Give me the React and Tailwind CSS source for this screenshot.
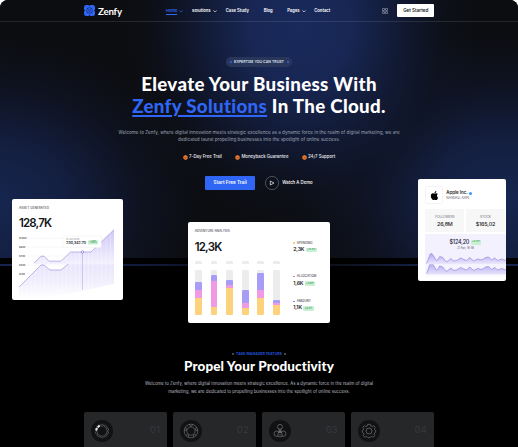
import React from "react";

const Chevron = ({ className = "" }) => (
  <svg viewBox="0 0 8 5" className={"h-[2.6px] w-[4.2px] " + className} fill="none" stroke="currentColor" strokeWidth="1.3">
    <path d="M0.8 0.8 L4 4 L7.2 0.8" />
  </svg>
);

const Logo = () => (
  <svg viewBox="0 0 33 33" className="h-[11px] w-[11px]">
    <path
      fill="#2f66f6"
      d="M7 0h6.500l3 3L19.500 0H26a7 7 0 0 1 7 7v6.500l-3 3 3 3V26a7 7 0 0 1-7 7h-6.500l-3-3-3 3H7a7 7 0 0 1-7-7v-6.500l3-3-3-3V7a7 7 0 0 1 7-7z"
    />
    <circle cx="16.500" cy="16.500" r="8.500" fill="none" stroke="#10214f" strokeWidth="1.800" />
    <circle cx="16.500" cy="16.500" r="3.200" fill="none" stroke="#10214f" strokeWidth="1.800" />
    <path d="M8 8l3 3M25 8l-3 3M8 25l3-3M25 25l-3-3" stroke="#10214f" strokeWidth="1.600" />
  </svg>
);

const Check = () => (
  <svg viewBox="0 0 14 14" className="h-[5px] w-[5px]">
    <path
      fill="#f0782c"
      d="M7 0l1.900 1.300 2.300-.1.700 2.200 1.900 1.300L13 7l.8 2.300-1.900 1.300-.7 2.200-2.300-.1L7 14l-1.900-1.300-2.300.1-.7-2.200L.2 9.300 1 7 .2 4.700l1.900-1.300.7-2.200 2.300.1z"
    />
    <path d="M4.200 7.200l2 2 3.600-4" fill="none" stroke="#20130c" strokeWidth="1.200" />
  </svg>
);

const Header = () => (
  <header className="relative flex h-[22px] items-center border-b border-white/10 text-[4px] font-semibold text-white">
    <div className="ml-[84px] flex w-[82px] items-center gap-[3px]">
      <Logo />
      <span className="font-['Lato',sans-serif] text-[9.700px] leading-[10px] font-bold tracking-[-0.200px]">Zenfy</span>
    </div>
    <nav className="flex w-[216px] items-center pt-[1px] leading-[6px] whitespace-nowrap">
      <span className="flex w-[26px] items-center gap-[2px] text-[#2f66f6]">
        <span className="relative">
          Home
          <span className="absolute -bottom-[1px] left-0 h-[0.7px] w-full bg-[#2f66f6]" />
        </span>
        <Chevron />
      </span>
      <span className="flex w-[33.7px] items-center gap-[2px] text-[4.100px]">
        Solutions <Chevron />
      </span>
      <span className="w-[38px] text-[4.200px]">Case Study</span>
      <span className="w-[23.500px] text-[4.200px]">Blog</span>
      <span className="flex w-[27px] items-center gap-[2px] text-[4.200px]">
        Pages <Chevron />
      </span>
      <span className="text-[4.200px]">Contact</span>
    </nav>
    <svg viewBox="0 0 18 18" className="h-[6px] w-[6px]" fill="none" stroke="#c5cad6" strokeWidth="1.500">
      <rect x="1" y="1" width="6.500" height="6.500" rx="1.500" />
      <rect x="10.500" y="1" width="6.500" height="6.500" rx="1.500" />
      <rect x="1" y="10.500" width="6.500" height="6.500" rx="1.500" />
      <rect x="10.500" y="10.500" width="6.500" height="6.500" rx="1.500" />
    </svg>
    <button className="ml-[9.300px] flex h-[13.300px] w-[37px] items-center justify-center rounded-[1px] bg-white pt-[1px] text-[4.600px] leading-[6px] font-semibold whitespace-nowrap text-[#15171c]">
      Get Started
    </button>
  </header>
);

const Badge = ({ children }) => (
  <span className="flex h-[4.800px] items-center rounded-[1px] bg-[#c9f0d2] px-[1.200px] text-[2.500px] font-medium tracking-normal text-[#23804a]">
    {children}
  </span>
);

const AssetCard = () => (
  <div className="mt-[177.300px] h-[100.500px] w-[111px] shrink-0 overflow-hidden rounded-[2px] bg-white">
    <svg viewBox="12 199.300 111 100.500" className="block h-full w-full font-['Inter',sans-serif]">
      <defs>
        <linearGradient id="areaA" x1="0" y1="0" x2="0" y2="1">
          <stop offset="0" stopColor="#cfc7f6" />
          <stop offset="1" stopColor="#f4f1fe" />
        </linearGradient>
        <linearGradient id="areaB" x1="0" y1="264.500" x2="0" y2="299" gradientUnits="userSpaceOnUse">
          <stop offset="0" stopColor="#e9e5fb" />
          <stop offset="0.500" stopColor="#f1eefd" />
          <stop offset="1" stopColor="#fff" />
        </linearGradient>
        <pattern id="stripes" width="4.400" height="10" patternUnits="userSpaceOnUse">
          <rect width="0.800" height="10" fill="#fff" opacity="0.350" />
        </pattern>
      </defs>
      <text x="19" y="208.900" fontSize="3.100" fontWeight="500" fill="#4c4c55" textLength="30">ASSET GENERATED</text>
      <text x="19" y="227.600" fontSize="11.500" fontWeight="600" fill="#131418" textLength="33">128,7K</text>
      {["$1000", "$900", "$700", "$400", "$100"].map((t, i) => (
        <g key={t}>
          <text x="19" y={239.7 + i * 8.85} fontSize="2.500" fontWeight="500" fill="#3c3c46">{t}</text>
          <path d={`M28 ${238.7 + i * 8.85}H114`} stroke="#dcdce2" strokeWidth="0.400" strokeDasharray="1.600 1.600" />
        </g>
      ))}
      <path d="M34 263.500L41 256.500H44L49 261.500H61L70.500 252.300H91L114 230V264.500H34z" fill="url(#areaA)" />
      <path d="M19 287.500L41 265.300H44L50 270.300H61L68 264.500H114V284L80 292L40 299H19z" fill="url(#areaB)" />
      <path d="M34 263.500L41 256.500H44L49 261.500H61L70.500 252.300H91L114 230V285L60 296H19V287.500L41 265.300z" fill="url(#stripes)" />
      <path d="M34 263.500L41 256.500H44L49 261.500H61L70.500 252.300H91L114 230M19 287.500L41 265.300H44L50 270.300H61L68 264.500" fill="none" stroke="#a096e0" strokeWidth="0.700" />
      <path d="M82.500 252.300V290" stroke="#b5abea" strokeWidth="0.600" />
      <circle cx="82.500" cy="252.300" r="1.200" fill="#fff" stroke="#7b70c9" strokeWidth="0.700" />
      <rect x="63" y="236.200" width="38" height="11.500" rx="1" fill="#fff" stroke="#eeeef2" strokeWidth="0.500" />
      <text x="66" y="239.900" fontSize="2.200" fill="#8d8d96" textLength="13.500">07 July 00:00</text>
      <text x="66" y="244.200" fontSize="4" fontWeight="500" fill="#24242c" textLength="20">230,342.70</text>
      <rect x="88" y="240.500" width="10" height="4.400" rx="0.800" fill="#c9f0d2" />
      <text x="89.300" y="243.700" fontSize="2.800" fontWeight="500" fill="#23804a" textLength="7.400">+3.4%</text>
    </svg>
  </div>
);

const bars = [
  [12.3, 8.2, 7.5, 16.7],
  [5.3, 5.4, 26.1, 7.9],
  [10, 5, 3, 26.7],
  [20.3, 12.7, 5, 6.7],
  [3, 17.5, 7.5, 16.7],
  [30, 2.7, 2, 10],
];

const Stat = ({ dot, label, value, change }) => (
  <div className="flex flex-col gap-[1.700px]">
    <div className="flex h-[4px] items-center gap-[2px] text-[3.100px] font-medium whitespace-nowrap text-[#4c4c55]">
      <span className={"h-[1.500px] w-[1.500px] rounded-full " + dot} />
      {label}
    </div>
    <div className="flex h-[5.500px] items-center gap-[1.500px] pt-[1px] text-[5.200px] font-semibold tracking-[-0.150px] text-[#16171b]">
      {value}
      <Badge>{change}</Badge>
    </div>
  </div>
);

const AnalysisCard = () => (
  <div className="mt-[32.500px] flex h-[100.300px] w-[142.700px] rounded-[2px] bg-white px-[7px] text-left">
    <div className="w-[98.600px]">
      <p className="mt-[7px] h-[4px] text-[3.100px] leading-[4px] font-medium whitespace-nowrap text-[#4c4c55]">ADVENTURE ANALYSIS</p>
      <p className="mt-[7.700px] h-[12px] text-[11.500px] leading-[12px] font-semibold tracking-[-0.800px] text-[#131418]">12,3K</p>
      <div className="mt-[7.800px] flex gap-[8.900px] pl-[0.500px]">
        {bars.map((b, i) => (
          <div key={i} className="w-[6.700px] shrink-0">
            <div className="h-[3px] rounded-t-[1.500px] bg-[#ececec]" />
            <div className="mt-[6px] overflow-hidden rounded-[1.200px]">
              <div className="bg-[#ececec]" style={{ height: b[0] }} />
              <div className="rounded-t-[1px] bg-[#a79df6]" style={{ height: b[1] }} />
              <div className="bg-[#f19ae4]" style={{ height: b[2] }} />
              <div className="bg-[#fdd27c]" style={{ height: b[3] }} />
            </div>
          </div>
        ))}
      </div>
    </div>
    <div className="pt-[18.600px]">
      <Stat dot="bg-[#fbbf4b]" label="SPENDING" value="2,3K" change="+11.4%" />
      <div className="h-[22.200px]" />
      <Stat dot="bg-[#e45fd0]" label="ALLOCATION" value="1,6K" change="+4.6%" />
      <div className="h-[13.800px]" />
      <Stat dot="bg-[#7d70f0]" label="AMOUNT" value="1,1K" change="+9.2%" />
    </div>
  </div>
);

const wave =
  "L428.500 259.500 430.500 254 432 253.500 434 256 436.500 260.500 438 260 440 256.500 443 257.500 446.500 262 449 260.500 451 258.500 454 261 457 260.500 461 258 464 259.500 467 260.500 470 257.500 474 261 478 259 482 260 486 257.500 489 257 492 260 495 258 498 260.500 502 259 506 260.500";

const StockCard = () => (
  <div className="mt-[157.300px] h-[101.300px] w-[88px] shrink-0 overflow-hidden rounded-[2px] bg-white pt-[6.700px] pl-[7.300px]">
    <div className="flex h-[18.500px] items-center gap-[3.300px]">
      <div className="flex h-[18.500px] w-[17.700px] items-center justify-center rounded-[1.500px] border border-[#f3f3f5]">
        <svg viewBox="0 0 24 24" className="h-[9px] w-[9px]">
          <path d="M12.152 6.896c-.948 0-2.415-1.078-3.960-1.040-2.040.027-3.910 1.183-4.961 3.014-2.117 3.675-.546 9.103 1.519 12.090 1.013 1.454 2.208 3.090 3.792 3.039 1.520-.065 2.090-.987 3.935-.987 1.831 0 2.350.987 3.960.948 1.637-.026 2.676-1.480 3.676-2.948 1.156-1.688 1.636-3.325 1.662-3.415-.039-.013-3.182-1.221-3.220-4.857-.026-3.040 2.480-4.494 2.597-4.559-1.429-2.090-3.623-2.324-4.390-2.376-2-.156-3.675 1.090-4.610 1.090zM15.530 3.830c.843-1.012 1.400-2.427 1.245-3.830-1.207.052-2.662.805-3.532 1.818-.780.896-1.454 2.338-1.273 3.714 1.338.104 2.715-.688 3.559-1.701" />
        </svg>
      </div>
      <div className="mt-[0.700px] whitespace-nowrap">
        <p className="flex h-[5.400px] items-center gap-[1.400px] text-[4.400px] font-semibold text-[#1c1d22]">
          Apple Inc.
          <span className="h-[3.300px] w-[3.300px] rounded-full bg-[#3b98f5]" />
        </p>
        <p className="h-[4.600px] text-[3.200px] leading-[4.600px] text-[#56565f]">NASDAQ: AAPL</p>
      </div>
    </div>
    <div className="mt-[4.500px] flex gap-[1.500px] text-center">
      {[
        ["FOLLOWERS", "26,8M"],
        ["STOCK", "$165,02"],
      ].map(([k, v]) => (
        <div key={k} className="h-[23px] w-[39.100px] rounded-[1px] bg-[#f7f7f8] pt-[5.700px]">
          <p className="h-[4px] text-[3.200px] leading-[4px] text-[#6a6a72]">{k}</p>
          <p className="mt-[2.300px] h-[6px] text-[5.400px] leading-[6px] font-medium tracking-[-0.150px] text-[#1c1d22]">{v}</p>
        </div>
      ))}
    </div>
    <div className="mt-[2px] h-[43px] bg-[#f3f1fd] pt-[5.300px]">
      <div className="flex h-[6px] items-center justify-center gap-[1.700px] pr-[0.500px] text-[5.500px] font-medium tracking-[-0.200px] text-[#1c1d3a]">
        $124,20 <Badge>+3.4%</Badge>
      </div>
      <p className="mt-[0.500px] h-[4px] text-center text-[2.800px] leading-[4px] text-[#5c5c6b]">21 Apr, 16:56</p>
      <svg viewBox="425.300 250 80.700 27.200" className="block h-[27.200px] w-[80.700px]">
        <defs>
          <linearGradient id="wv" x1="0" y1="0" x2="0" y2="1">
            <stop offset="0" stopColor="#b3aaf0" />
            <stop offset="1" stopColor="#ebe8fc" />
          </linearGradient>
          <clipPath id="low">
            <rect x="425" y="264.200" width="82" height="13" />
          </clipPath>
        </defs>
        <path d={"M427 264" + wave + "V264z"} fill="url(#wv)" />
        <path d={"M427 263.500" + wave} fill="none" stroke="#9389de" strokeWidth="0.700" />
        <g clipPath="url(#low)">
          <rect x="425" y="264.200" width="82" height="13" fill="#f5f3fe" />
          <g transform="translate(0 9.500)">
            <path d={"M427 264" + wave + "V266H427z"} fill="url(#wv)" />
            <path d={"M427 264" + wave} fill="none" stroke="#9389de" strokeWidth="0.700" />
          </g>
        </g>
        <rect x="425" y="274.500" width="82" height="3" fill="#fbfaff" />
      </svg>
    </div>
  </div>
);

const Hero = () => (
  <section className="relative flex h-[300.700px] items-start pl-3">
    <AssetCard />
    <div className="-ml-[23px] flex w-[318px] shrink-0 flex-col items-center text-center whitespace-nowrap">
      <div className="mt-[35px] flex h-[10px] w-[66.500px] items-center justify-center gap-[2.500px] rounded-full bg-[#2a355a] text-[3.600px] font-semibold text-[#dfe3ee]">
        <span className="h-[2px] w-[2px] rounded-full bg-[#2f66f6]" />
        <span className="pt-[1px] leading-[5px]">EXPERTISE YOU CAN TRUST</span>
        <span className="h-[2px] w-[2px] rounded-full bg-[#2f66f6]" />
      </div>
      <h1 className="mt-[5.500px] font-['Lato',sans-serif] text-[18.700px] leading-[22.700px] font-black tracking-[0.320px] text-white">
        Elevate Your Business With
        <br />
        <span className="text-[#2f66f6] underline decoration-[1.500px] underline-offset-[2px]">Zenfy Solutions</span> In The Cloud.
      </h1>
      <p className="mt-[10.900px] text-[4.580px] leading-[7.400px] text-[#9da2b1]">
        Welcome to Zenfy, where digital innovation meets strategic excellence as a dynamic force in the realm of digital marketing, we are
        <br />
        dedicated taurat propelling businesses into the spotlight of online success.
      </p>
      <div className="mt-[10.700px] flex h-[6px] items-center gap-[13.200px] text-[4.350px] font-medium text-[#eceef3]">
        {["7-Day Free Trail", "Moneyback Guarantee", "24/7 Support"].map((t) => (
          <span key={t} className="flex items-center gap-[1.300px]">
            <Check />
            <span className="leading-[6px]">{t}</span>
          </span>
        ))}
      </div>
      <div className="mt-[15.700px] flex h-[14px] items-center text-[4.300px] font-medium text-white">
        <button className="h-[14px] w-[49.500px] rounded-[1px] bg-[#2f66f6] text-[4.700px] font-semibold">Start Free Trail</button>
        <svg viewBox="0 0 42 42" className="mr-[3px] ml-[10.300px] h-[14px] w-[14px]" fill="none">
          <circle cx="21" cy="21" r="19.800" stroke="#8b8e96" strokeWidth="1.500" />
          <path d="M16 15v12l11-6z" stroke="#fff" strokeWidth="2" />
        </svg>
        <span className="pt-[1px] leading-[6px]">Watch A Demo</span>
      </div>
      <AnalysisCard />
    </div>
    <StockCard />
  </section>
);

const Icon1 = () => (
  <g>
    {[0, 36, 72, 108, 144, 180, 216, 252, 288, 324].map((a) => (
      <rect key={a} x="-4" y="-20" width="8" height="5.500" rx="2" strokeWidth="1.200" transform={`rotate(${a})`}
        stroke={a > 280 ? "#e4e6e8" : "#96999c"} fill={a > 280 ? "#e4e6e8" : "none"} />
    ))}
  </g>
);
const Icon2 = () => (
  <g fill="none" stroke="#96999c" strokeWidth="1.400">
    <circle r="20.500" />
    <circle r="12.500" />
    {[0, 72, 144, 216, 288].map((a) => (
      <path key={a} d="M-4.500 -20.500l2 6h5l2-6" strokeWidth="1.200" transform={`rotate(${a})`} />
    ))}
  </g>
);
const Icon3 = () => (
  <g fill="#101213" stroke="#a2a5a8" strokeWidth="1.400">
    <circle cx="0" cy="-12.500" r="7.500" />
    <circle cx="-10" cy="8" r="8" />
    <circle cx="10" cy="8" r="8" />
    <path d="M-2.500 -5h5v6h-5z" />
    <rect x="-6" y="5" width="12" height="12" rx="1.500" />
    <path d="M-3.500 5v-2a3.500 3.500 0 0 1 7 0v2M0 9v4" fill="none" />
  </g>
);
const Icon4 = () => (
  <g fill="none" stroke="#a2a5a8" strokeWidth="1.400">
    <path d="M-4 -20h8l1.500 5 4 1.700 4.600-2.500 4.600 4.600-2.500 4.600 1.800 4L20 -1v5l-3 2-2 4 2.500 4-5 4.500-4.500-2-4 1.500L2.500 20h-5L-4 18l-4-1.500-4.500 2-5-4.500 2.500-4-2-4-3-2v-5l2-1.600 1.800-4-2.500-4.600 4.600-4.600 4.600 2.500 4-1.700z" strokeLinejoin="round" />
    <circle r="9" />
  </g>
);

const Features = () => (
  <section className="relative flex flex-col items-center text-center whitespace-nowrap">
    <div className="mt-[28.300px] flex h-[6px] items-center gap-[2.500px] text-[3.600px] font-semibold text-[#2558e0]">
      <span className="h-[2px] w-[2px] rounded-full bg-[#5d5f63]" />
      <span className="pt-[1px] leading-[5px]">TASK MANAGER FEATURE</span>
      <span className="h-[2px] w-[2px] rounded-full bg-[#5d5f63]" />
    </div>
    <h2 className="mt-[1.400px] h-[16px] font-['Lato',sans-serif] text-[13.500px] leading-[16px] font-black tracking-[0.100px] text-white">Propel Your Productivity</h2>
    <p className="mt-[5.900px] text-[4.300px] leading-[8px] text-[#b9bbc0]">
      Welcome to Zenfy, where digital innovation meets strategic excellence. As a dynamic force in the realm of digital
      <br />
      marketing, we are dedicated to propelling businesses into the spotlight of online success.
    </p>
    <div className="mt-[15.700px] flex gap-[6.300px]">
      {[Icon1, Icon2, Icon3, Icon4].map((I, i) => (
        <div key={i} className="flex h-[40px] w-[82.700px] items-start justify-between rounded-[2px] bg-[#252729] px-[7px] pt-[8px]">
          <svg viewBox="-33 -33 66 66" className="h-[22px] w-[22px]">
            <circle r="33" fill="#101213" />
            <I />
          </svg>
          <span className="mt-[5.500px] text-[9.500px] leading-[10px] font-medium text-[#33363a]">0{i + 1}</span>
        </div>
      ))}
    </div>
  </section>
);

export default function App() {
  return (
    <div className="h-[447px] w-[518px] overflow-hidden bg-white font-['Inter',sans-serif]">
      <div className="relative h-[447px] overflow-hidden rounded-t-[8px] bg-black">
        <div className="absolute inset-x-0 top-0 h-[257.500px] bg-[#0c0d10] bg-[radial-gradient(ellipse_180px_210px_at_300px_25px,#192a5c_0%,#182858f0_28%,#14204699_58%,#10183044_80%,#0c0d1000_100%),radial-gradient(ellipse_210px_170px_at_-5px_205px,#16264f_0%,#152249d8_35%,#11193470_70%,#0c0d1000_100%),radial-gradient(ellipse_210px_170px_at_505px_200px,#16264f_0%,#152249d8_35%,#11193470_70%,#0c0d1000_100%)]" />
        <div className="absolute inset-x-0 top-[264px] h-[2px] bg-[linear-gradient(90deg,#16244f,#101a38_30%,#0b0c10_45%,#0b0c10_60%,#16244f_85%)]" />
        <Header />
        <Hero />
        <Features />
      </div>
    </div>
  );
}
